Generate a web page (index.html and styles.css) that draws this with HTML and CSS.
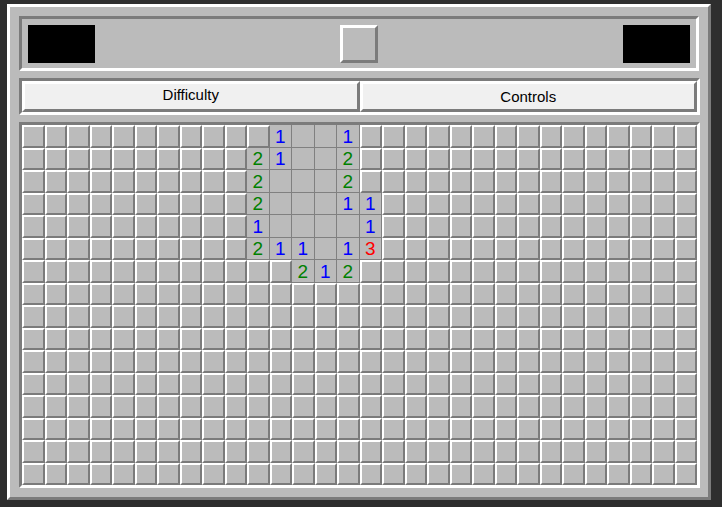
FILE: index.html
```html
<!DOCTYPE html>
<html lang="en">
<head>
<meta charset="utf-8">
<title>Minesweeper</title>
<link rel="stylesheet" href="styles.css">
</head>
<body>
<div class="game">
  <div class="header">
    <div class="counter"></div>
    <div class="face"></div>
    <div class="counter"></div>
  </div>
  <div class="menu">
    <div class="btn btn-difficulty">Difficulty</div>
    <div class="btn">Controls</div>
  </div>
  <div class="board" id="board"></div>
</div>
<script src="script.js"></script>
</body>
</html>
```
FILE: styles.css
```css
* { box-sizing: border-box; }
html, body { margin: 0; }
body {
  background: #2e2e2e;
  padding: 4px 0 0 7px;
  font-family: "Liberation Sans", Arial, sans-serif;
}
.game {
  width: 704px;
  height: 496px;
  background: #bbbbbb;
  border: 3px solid;
  border-color: #ffffff #7b7b7b #7b7b7b #ffffff;
  padding: 9px;
  display: flex;
  flex-direction: column;
  align-items: flex-start;
  gap: 7px;
}
.header {
  width: 680px;
  height: 55px;
  flex: none;
  border: 3px solid;
  border-color: #7b7b7b #ffffff #ffffff #7b7b7b;
  padding: 6px 6px 5px;
  display: flex;
  justify-content: space-between;
  align-items: flex-start;
}
.counter {
  width: 67px;
  height: 38px;
  background: #000000;
}
.face {
  width: 38px;
  height: 38px;
  border: 3px solid;
  border-color: #ffffff #7b7b7b #7b7b7b #ffffff;
  background: #bbbbbb;
}
.menu {
  width: 681px;
  height: 37px;
  flex: none;
  border: 3px solid;
  border-color: #7b7b7b #ffffff #ffffff #7b7b7b;
  display: flex;
}
.btn {
  flex: 1;
  height: 31px;
  border: 3px solid;
  border-color: #ffffff #7b7b7b #7b7b7b #ffffff;
  background: #f0f0f0;
  color: #000000;
  font-size: 15px;
  line-height: 25px;
  text-align: center;
}
.btn-difficulty {
  line-height: 21px;
  padding-bottom: 4px;
}
.board {
  width: 681px;
  height: 366px;
  flex: none;
  border: 3px solid;
  border-color: #7b7b7b #ffffff #ffffff #7b7b7b;
  display: grid;
  grid-template-columns: repeat(30, 22.5px);
  grid-template-rows: repeat(16, 22.5px);
}
.cell {
  border: 2px solid;
  border-color: #ffffff #7b7b7b #7b7b7b #ffffff;
  background: #bbbbbb;
}
.cell.open {
  border-width: 0 1px 1px 0;
  border-color: #808080;
  padding-top: 1px;
  display: flex;
  align-items: center;
  justify-content: center;
  font-size: 19px;
  line-height: 1;
}
.n1 { color: #0000ff; }
.n2 { color: #008000; }
.n3 { color: #ff0000; }
```
FILE: script.js
```js
(function () {
  var board = document.getElementById('board');
  var opened = {
    0: '#1..1#',
    1: '21..2#',
    2: '2...2#',
    3: '2...11',
    4: '1....1',
    5: '211.13',
    6: '##212#'
  };
  for (var r = 0; r < 16; r++) {
    for (var c = 0; c < 30; c++) {
      var ch = '#';
      if (opened[r] && c >= 10 && c < 16) {
        ch = opened[r].charAt(c - 10);
      }
      var el = document.createElement('div');
      el.className = 'cell';
      if (ch !== '#') {
        el.className += ' open';
        if (ch !== '.') {
          el.textContent = ch;
          el.className += ' n' + ch;
        }
      }
      board.appendChild(el);
    }
  }
})();
```
